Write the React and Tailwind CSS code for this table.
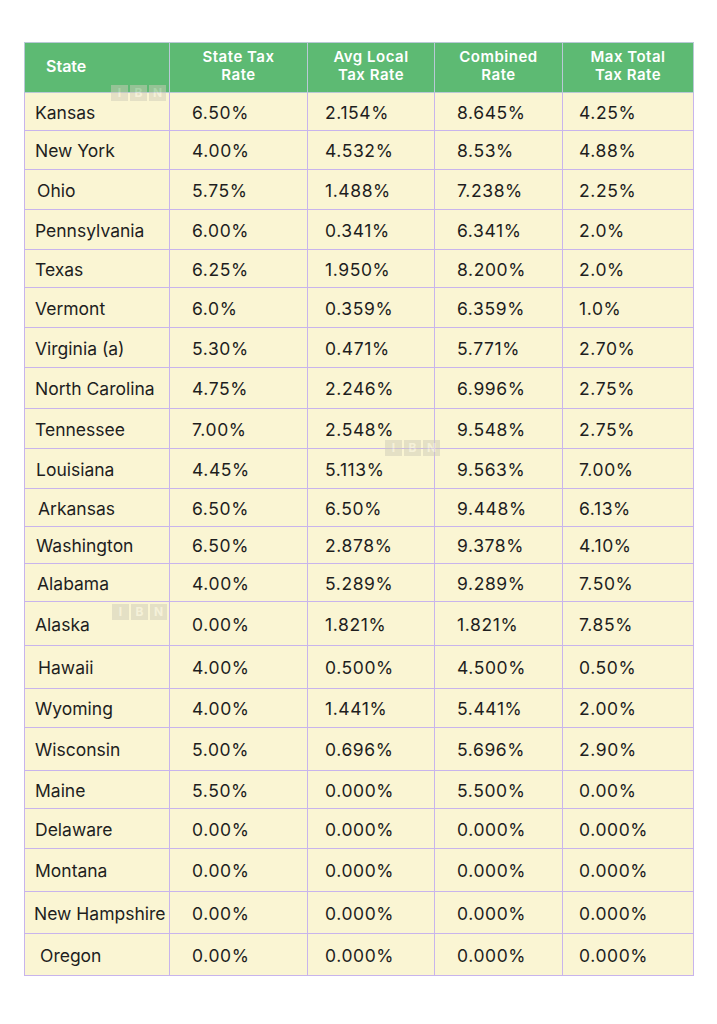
const rows = [
  ["Kansas", "6.50%", "2.154%", "8.645%", "4.25%", 38, "pl-[10px]"],
  ["New York", "4.00%", "4.532%", "8.53%", "4.88%", 39, "pl-[10px]"],
  ["Ohio", "5.75%", "1.488%", "7.238%", "2.25%", 40, "pl-[12px]"],
  ["Pennsylvania", "6.00%", "0.341%", "6.341%", "2.0%", 40, "pl-[10px]"],
  ["Texas", "6.25%", "1.950%", "8.200%", "2.0%", 38, "pl-[10px]"],
  ["Vermont", "6.0%", "0.359%", "6.359%", "1.0%", 40, "pl-[10px]"],
  ["Virginia (a)", "5.30%", "0.471%", "5.771%", "2.70%", 40, "pl-[10px]"],
  ["North Carolina", "4.75%", "2.246%", "6.996%", "2.75%", 41, "pl-[10px]"],
  ["Tennessee", "7.00%", "2.548%", "9.548%", "2.75%", 40, "pl-[10px]"],
  ["Louisiana", "4.45%", "5.113%", "9.563%", "7.00%", 40, "pl-[11px]"],
  ["Arkansas", "6.50%", "6.50%", "9.448%", "6.13%", 38, "pl-[13px]"],
  ["Washington", "6.50%", "2.878%", "9.378%", "4.10%", 37, "pl-[11px]"],
  ["Alabama", "4.00%", "5.289%", "9.289%", "7.50%", 38, "pl-[12px]"],
  ["Alaska", "0.00%", "1.821%", "1.821%", "7.85%", 44, "pl-[10px]"],
  ["Hawaii", "4.00%", "0.500%", "4.500%", "0.50%", 43, "pl-[13px]"],
  ["Wyoming", "4.00%", "1.441%", "5.441%", "2.00%", 39, "pl-[10px]"],
  ["Wisconsin", "5.00%", "0.696%", "5.696%", "2.90%", 43, "pl-[10px]"],
  ["Maine", "5.50%", "0.000%", "5.500%", "0.00%", 38, "pl-[10px]"],
  ["Delaware", "0.00%", "0.000%", "0.000%", "0.000%", 40, "pl-[10px]"],
  ["Montana", "0.00%", "0.000%", "0.000%", "0.000%", 43, "pl-[10px]"],
  ["New Hampshire", "0.00%", "0.000%", "0.000%", "0.000%", 42, "pl-[9px]"],
  ["Oregon", "0.00%", "0.000%", "0.000%", "0.000%", 42, "pl-[15px]"],
];

const headSplit = [
  ["State Tax", "Rate"],
  ["Avg Local", "Tax Rate"],
  ["Combined", "Rate"],
  ["Max Total", "Tax Rate"],
];

function Watermark({ className }) {
  return (
    <div className={`absolute flex gap-[2px] opacity-50 pointer-events-none ${className}`}>
      <span className="w-[17px] h-[16px] bg-[#cfccb9] text-[12px] leading-[16px] text-center text-[#f2efdf] font-bold">I</span>
      <span className="w-[17px] h-[16px] bg-[#cfccb9] text-[12px] leading-[16px] text-center text-[#f2efdf] font-bold">B</span>
      <span className="w-[17px] h-[16px] bg-[#cfccb9] text-[12px] leading-[16px] text-center text-[#f2efdf] font-bold">N</span>
    </div>
  );
}

export default function App() {
  return (
    <div className="w-[717px] h-[1024px] bg-white pt-[42px] pl-[24px] font-['Inter',sans-serif]">
      <div className="relative w-[669px]">
        <table className="border-collapse table-fixed w-[669px] text-[#1e1e1e]">
          <colgroup>
            <col className="w-[145px]" />
            <col className="w-[138px]" />
            <col className="w-[127px]" />
            <col className="w-[128px]" />
            <col className="w-[131px]" />
          </colgroup>
          <thead>
            <tr className="h-[50px] bg-[#5dba73] text-white">
              <th className="border border-[#b9c9d6] text-left pl-[21px] pb-[3px] text-[16px] font-semibold">
                State
              </th>
              {headSplit.map((h, i) => (
                <th
                  key={i}
                  className="border border-[#b9c9d6] text-center pb-[3px] text-[15px] font-semibold leading-[18px] tracking-[0.5px]"
                >
                  <span className="block">{h[0]}</span>
                  <span className="block">{h[1]}</span>
                </th>
              ))}
            </tr>
          </thead>
          <tbody className="bg-[#faf5d3] text-[17.5px] leading-[20px]">
            {rows.map((r) => (
              <tr key={r[0]} style={{ height: r[5] + "px" }}>
                <td className={`border border-[#c8b4ec] whitespace-nowrap pt-[2px] ${r[6]}`}>{r[0]}</td>
                <td className="border border-[#c8b4ec] pl-[22px] pt-[2px] tracking-[0.6px]">{r[1]}</td>
                <td className="border border-[#c8b4ec] pl-[17px] pt-[2px] tracking-[0.6px]">{r[2]}</td>
                <td className="border border-[#c8b4ec] pl-[22px] pt-[2px] tracking-[0.6px]">{r[3]}</td>
                <td className="border border-[#c8b4ec] pl-[16px] pt-[2px] tracking-[0.6px]">{r[4]}</td>
              </tr>
            ))}
          </tbody>
        </table>
        <Watermark className="left-[87px] top-[43px]" />
        <Watermark className="left-[361px] top-[398px]" />
        <Watermark className="left-[88px] top-[562px]" />
      </div>
    </div>
  );
}
